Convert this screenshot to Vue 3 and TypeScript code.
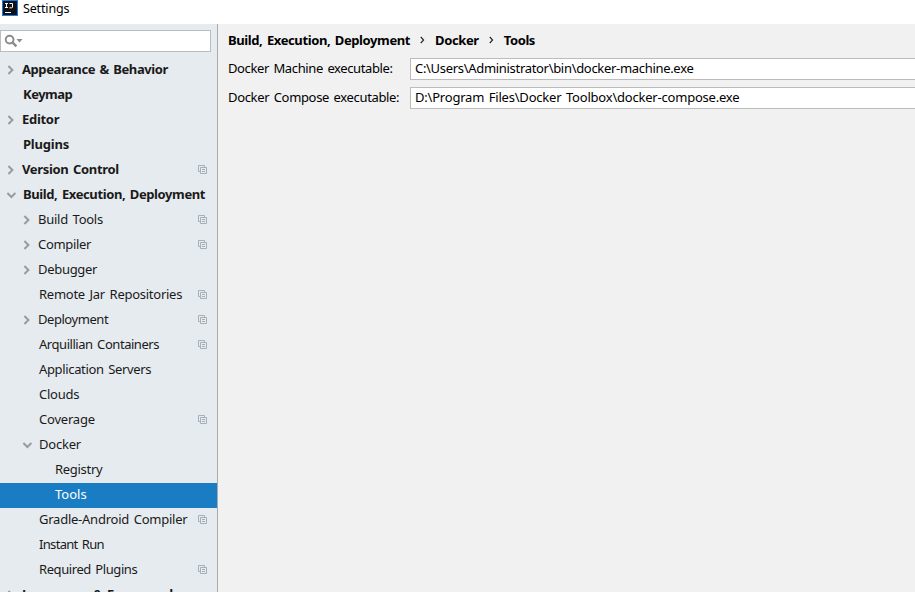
<script setup lang="ts">
interface TreeItem {
  label: string
  level: 0 | 1 | 2
  tracking: number
  state?: 'open' | 'closed'
  project?: boolean
  selected?: boolean
}

const items: TreeItem[] = [
  { label: 'Appearance & Behavior', level: 0, tracking: -0.42, state: 'closed' },
  { label: 'Keymap', level: 0, tracking: -0.5 },
  { label: 'Editor', level: 0, tracking: -0.3, state: 'closed' },
  { label: 'Plugins', level: 0, tracking: -0.2 },
  { label: 'Version Control', level: 0, tracking: -0.33, state: 'closed', project: true },
  { label: 'Build, Execution, Deployment', level: 0, tracking: -0.39, state: 'open' },
  { label: 'Build Tools', level: 1, tracking: -0.25, state: 'closed', project: true },
  { label: 'Compiler', level: 1, tracking: -0.33, state: 'closed', project: true },
  { label: 'Debugger', level: 1, tracking: -0.3, state: 'closed' },
  { label: 'Remote Jar Repositories', level: 1, tracking: -0.26, project: true },
  { label: 'Deployment', level: 1, tracking: -0.45, state: 'closed', project: true },
  { label: 'Arquillian Containers', level: 1, tracking: -0.45, project: true },
  { label: 'Application Servers', level: 1, tracking: -0.35 },
  { label: 'Clouds', level: 1, tracking: -0.25 },
  { label: 'Coverage', level: 1, tracking: -0.2, project: true },
  { label: 'Docker', level: 1, tracking: -0.2, state: 'open' },
  { label: 'Registry', level: 2, tracking: -0.3 },
  { label: 'Tools', level: 2, tracking: 0, selected: true },
  { label: 'Gradle-Android Compiler', level: 1, tracking: -0.24, project: true },
  { label: 'Instant Run', level: 1, tracking: -0.68 },
  { label: 'Required Plugins', level: 1, tracking: -0.42, project: true },
  { label: 'Languages & Frameworks', level: 0, tracking: -0.42, state: 'closed' },
]

const fields = [
  {
    label: 'Docker Machine executable:',
    labelTracking: -0.38,
    value: 'C:\\Users\\Administrator\\bin\\docker-machine.exe',
    valueTracking: -0.31,
  },
  {
    label: 'Docker Compose executable:',
    labelTracking: -0.34,
    value: 'D:\\Program Files\\Docker Toolbox\\docker-compose.exe',
    valueTracking: -0.21,
  },
]

const spacing = (em: number) => ({ letterSpacing: em + 'px' })
</script>

<template>
  <div class="window">
    <header class="titlebar">
      <svg class="logo" width="16" height="16" viewBox="0 0 16 16">
        <rect width="16" height="16" fill="#187be8" />
        <rect x="1" y="1" width="14" height="14" fill="#101216" />
        <path d="M3 3.500h3M4.500 3.500v4M3 7.500h3M7.500 3.500h3v3.500q0 .8-.9.800h-2.200M3 12.500h6" fill="none" stroke="#fff" />
      </svg>
      <span class="title">Settings</span>
    </header>
    <div class="body">
      <aside class="sidebar">
        <div class="search">
          <svg width="20" height="16" viewBox="0 0 20 16">
            <circle cx="5.600" cy="5.600" r="3.900" fill="none" stroke="#8b8b8b" stroke-width="1.900" />
            <path d="M8.400 8.400l4 4" stroke="#8b8b8b" stroke-width="2.400" />
            <path d="M12.500 5h6l-3 3.500z" fill="#8b8b8b" />
          </svg>
        </div>
        <ul class="tree">
          <li
            v-for="item in items"
            :key="item.label"
            class="row"
            :class="['level-' + item.level, item.state, { selected: item.selected }]"
          >
            <span class="arrow">
              <svg v-if="item.state === 'closed'" width="10" height="10" viewBox="0 0 10 10">
                <path d="M2.400 1l4 4-4 4" fill="none" stroke="#999c9e" stroke-width="2" />
              </svg>
              <svg v-else-if="item.state === 'open'" width="10" height="10" viewBox="0 0 10 10">
                <path d="M1.400 3l4 4 4-4" fill="none" stroke="#999c9e" stroke-width="2" />
              </svg>
            </span>
            <span class="label" :style="spacing(item.tracking)">{{ item.label }}</span>
            <svg v-if="item.project" class="project" width="9" height="9" viewBox="0 0 9 9">
              <path d="M2 6.500H.5v-6h6V2M2.500 2.500h6v6h-6zM4 4.500h3M4 6.500h3" fill="none" stroke="#a5b0b8" />
            </svg>
          </li>
        </ul>
      </aside>
      <main class="content">
        <nav class="crumbs">
          <span>Build, Execution, Deployment</span>
          <svg width="5" height="8" viewBox="0 0 5 8"><path d="M.8 1l2.800 3-2.800 3" fill="none" stroke="#222" stroke-width="1.100" /></svg>
          <span>Docker</span>
          <svg width="5" height="8" viewBox="0 0 5 8"><path d="M.8 1l2.800 3-2.800 3" fill="none" stroke="#222" stroke-width="1.100" /></svg>
          <span>Tools</span>
        </nav>
        <div v-for="field in fields" :key="field.label" class="field">
          <span class="caption" :style="spacing(field.labelTracking)">{{ field.label }}</span>
          <div class="value" :style="spacing(field.valueTracking)">{{ field.value }}</div>
        </div>
      </main>
    </div>
  </div>
</template>

<style>
body {
  margin: 0;
  overflow: hidden;
}
</style>

<style scoped>
.window {
  display: flex;
  flex-direction: column;
  width: 100vw;
  height: 100vh;
  overflow: hidden;
  box-sizing: border-box;
  background: #fff;
  color: #1a1a1a;
  font: 13px/25px "Noto Sans", "Open Sans", sans-serif;
  word-spacing: 1.5px;
  white-space: nowrap;
}
.titlebar {
  display: flex;
  flex: 0 0 24px;
  padding-left: 2px;
  color: #000;
}
.title {
  margin-left: 5px;
  font-size: 12.5px;
  line-height: 18px;
  letter-spacing: -0.15px;
}
.body {
  display: flex;
  flex: 1;
  min-height: 0;
}
.sidebar {
  flex: 0 0 217px;
  border-right: 1px solid #aaa;
  background: #e6ebef;
  overflow: hidden;
}
.search {
  display: flex;
  box-sizing: border-box;
  width: 211px;
  height: 22px;
  margin: 6px 0;
  padding: 3px 0 0 3px;
  border: 1px solid #bcbcbc;
  background: #fff;
}
.tree {
  margin: 0;
  padding: 0;
  list-style: none;
}
.row {
  display: flex;
  align-items: center;
  box-sizing: border-box;
  height: 25px;
  padding-right: 10px;
  padding-bottom: 2px;
}
.level-0 {
  padding-left: 6px;
  font-weight: 700;
}
.level-1 {
  padding-left: 22px;
}
.level-2 {
  padding-left: 38px;
}
.selected {
  background: #1a7dc4;
  color: #fff;
}
.arrow {
  display: flex;
  flex: 0 0 17px;
}
.closed .arrow {
  flex-basis: 16px;
}
.label {
  height: 23px;
  line-height: 23px;
}
.project {
  margin-left: auto;
}
.content {
  flex: 1;
  min-width: 0;
  padding-left: 10px;
  background: #f1f1f1;
  color: #000;
}
.crumbs {
  display: flex;
  align-items: center;
  gap: 10px;
  box-sizing: border-box;
  height: 34px;
  padding-bottom: 2px;
  font-weight: 700;
  letter-spacing: -0.39px;
}
.field {
  display: flex;
  height: 22px;
  margin-bottom: 7px;
  line-height: 21px;
}
.caption {
  flex: 0 0 182px;
}
.value {
  flex: 1;
  box-sizing: border-box;
  padding-left: 4px;
  border: solid #bcbcbc;
  border-width: 1px 0 1px 1px;
  background: #fff;
  line-height: 19px;
}
</style>
